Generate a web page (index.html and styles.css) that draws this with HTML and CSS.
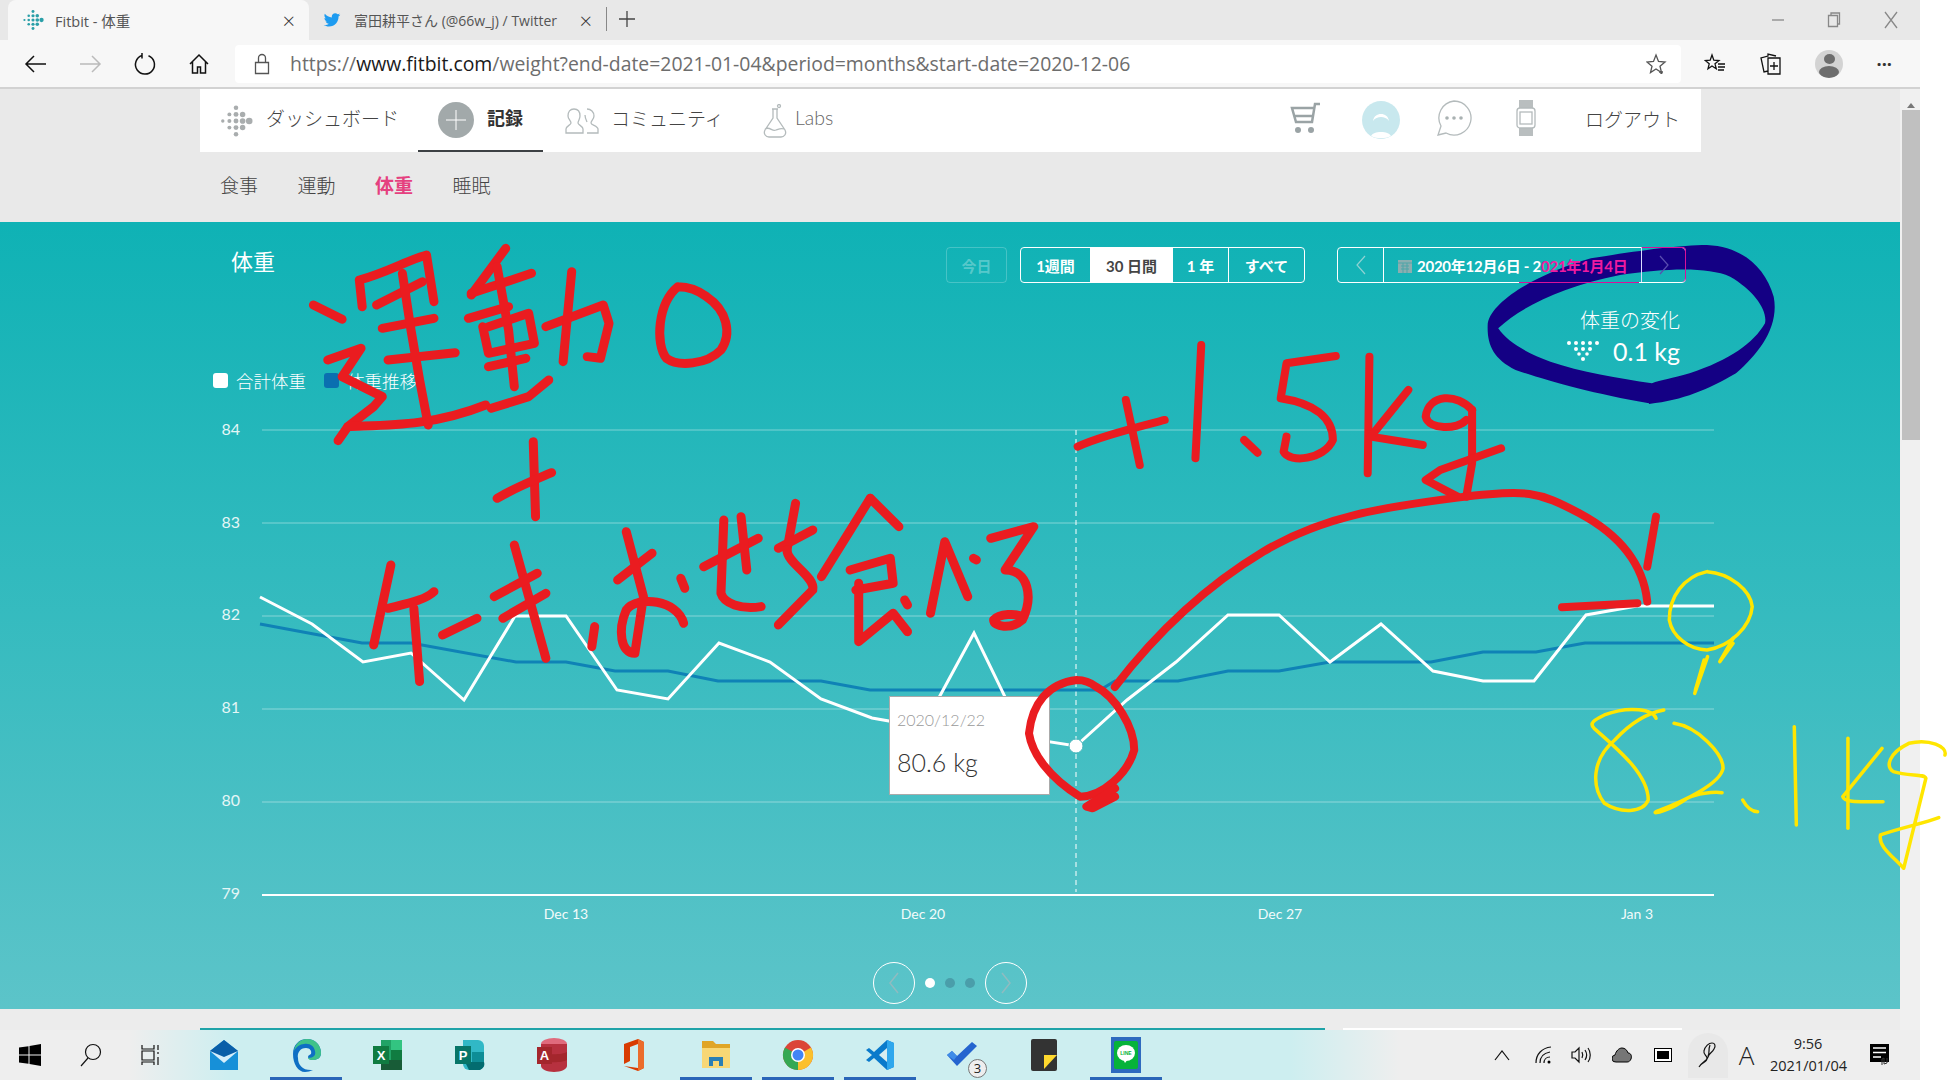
FILE: index.html
```html
<!DOCTYPE html>
<html lang="ja">
<head>
  <meta charset="UTF-8">
  <title>Fitbit - 体重</title>
  <link rel="stylesheet" href="styles.css">
</head>
<body>
  <svg class="defs" width="0" height="0">
    <symbol id="fitbit" viewBox="0 0 36 36">
      <circle cx="4" cy="18" r="1.8"/>
      <circle cx="11" cy="11" r="2.1"/><circle cx="11" cy="18" r="2.1"/><circle cx="11" cy="25" r="2.1"/>
      <circle cx="18" cy="4" r="2.4"/><circle cx="18" cy="11" r="2.6"/><circle cx="18" cy="18" r="2.6"/><circle cx="18" cy="25" r="2.6"/><circle cx="18" cy="32" r="2.4"/>
      <circle cx="25" cy="11" r="2.9"/><circle cx="25" cy="18" r="3"/><circle cx="25" cy="25" r="2.9"/>
      <circle cx="32" cy="18" r="3.5"/>
    </symbol>
  </svg>

  <div class="window">
    <div class="tabstrip">
      <div class="tab tab-active">
        <svg class="favicon fav-fitbit" width="22" height="22"><use href="#fitbit"/></svg>
        <span class="tab-title">Fitbit - 体重</span>
        <span class="tab-close">×</span>
      </div>
      <div class="tab tab-other">
        <svg class="favicon" width="18" height="18" viewBox="0 0 24 24"><path fill="#1d9bf0" d="M23 5c-.8.4-1.7.6-2.6.7.9-.6 1.7-1.4 2-2.500-.9.5-1.900.9-2.900 1.100C18.700 3.400 17.500 3 16.200 3c-2.500 0-4.500 2-4.500 4.500 0 .4 0 .7.1 1C8 8.300 4.700 6.500 2.500 3.800c-.4.7-.6 1.500-.6 2.300 0 1.600.8 2.900 2 3.700-.7 0-1.400-.2-2-.6v.1c0 2.200 1.600 4 3.600 4.400-.7.2-1.400.2-2 .1.600 1.800 2.200 3.100 4.200 3.100-2 1.500-4.300 2.200-6.700 1.900 2 1.300 4.400 2 6.900 2 8.300 0 12.800-6.900 12.800-12.800v-.6c.9-.6 1.700-1.400 2.300-2.400z"/></svg>
        <span class="tab-title">富田耕平さん (@66w_j) / Twitter</span>
        <span class="tab-close">×</span>
      </div>
      <span class="tab-sep"></span>
      <svg class="new-tab" width="20" height="20" viewBox="0 0 20 20"><path d="M10 2v16M2 10h16"/></svg>
      <div class="win-controls">
        <svg width="14" height="14" viewBox="0 0 14 14"><path d="M1 7h12"/></svg>
        <svg width="14" height="16" viewBox="0 0 14 16"><path d="M1.5 3.500h9v11h-9zM4 3.500V1h8.500v11h-2"/></svg>
        <svg width="16" height="20" viewBox="0 0 16 20"><path d="M2 2l12 16M14 2L2 18"/></svg>
      </div>
    </div>

    <div class="toolbar">
      <div class="nav-buttons">
        <svg width="24" height="24" viewBox="0 0 24 24"><path d="M22 12H2M10 4l-8 8 8 8"/></svg>
        <svg class="is-off" width="24" height="24" viewBox="0 0 24 24"><path d="M2 12h20M14 4l8 8-8 8"/></svg>
        <svg width="24" height="24" viewBox="0 0 24 24"><path d="M9 3.500A9.500 9.500 0 1 0 15.500 3.700M9 1v5.500"/></svg>
        <svg width="24" height="24" viewBox="0 0 24 24"><path d="M3 12l9-9 9 9M5.500 10v11h5v-6h3v6h5V10"/></svg>
      </div>
      <div class="address-bar">
        <svg class="lock" width="16" height="22" viewBox="0 0 16 22"><path d="M1.500 9.500h13v11h-13zM4.500 9.500V5a3.500 3.500 0 0 1 7 0v4.500"/></svg>
        <span class="url">https://<b>www.fitbit.com</b>/weight?end-date=2021-01-04&amp;period=months&amp;start-date=2020-12-06</span>
        <svg class="star-add" width="22" height="22" viewBox="0 0 22 22"><path d="M10 2l2.500 6.500 6.500.5-5 4.200 1.500 6.300-5.500-3.500-5.500 3.500 1.500-6.300-5-4.200 6.500-.5zM15 17v4M13 19h4"/></svg>
      </div>
      <div class="tool-buttons">
        <svg width="22" height="22" viewBox="0 0 22 22"><path d="M8 2l1.800 5.200 5.200.3-4 3.300 1.300 5-4.300-2.800-4 2.800 1.200-5-4-3.300 5-.3zM14 11h7M14 14h7M14 17h6"/></svg>
        <svg width="22" height="24" viewBox="0 0 22 24"><path d="M8 6h12v16H8zM8 19l-4 1-3-14 7-2V2l8 2M14 10v8M10 14h8"/></svg>
        <span class="profile"><i class="profile-head"></i><i class="profile-body"></i></span>
        <span class="more">···</span>
      </div>
    </div>

    <div class="viewport">
      <div class="page">
        <nav class="topnav">
          <a class="nav-item nav-dash">
            <svg class="nav-logo" width="34" height="34"><use href="#fitbit"/></svg>
            <span>ダッシュボード</span>
          </a>
          <a class="nav-item nav-log">
            <svg width="36" height="36" viewBox="0 0 36 36"><circle cx="18" cy="18" r="18" fill="#a2a9aa"/><path d="M18 8v20M8 18h20" stroke="#fff" fill="none"/></svg>
            <span><b>記録</b></span>
          </a>
          <a class="nav-item nav-community">
            <svg width="34" height="28" viewBox="0 0 34 28"><path class="line-icon" d="M9 2c4 0 6 3 6 7 0 3-2 5-2 7 0 2 5 3 5 6v4H1v-4c0-3 5-4 5-6 0-2-3-4-3-7 0-4 2-7 6-7zM22 2c4 0 7 3 7 7 0 3-3 5-3 7s7 3 7 6v4H22M20 8c0 3 1 5 2 7"/></svg>
            <span>コミュニティ</span>
          </a>
          <a class="nav-item nav-labs">
            <svg width="24" height="34" viewBox="0 0 24 34"><path class="line-icon" d="M9 5h6M10 5v9L2 26c-2 4 1 7 4 7h12c3 0 6-3 4-7l-8-12V5M2 25c5-3 7 3 11 1 3-1 5-2 8-1"/><circle class="line-icon" cx="16" cy="2" r="1.500"/></svg>
            <span>Labs</span>
          </a>
          <div class="nav-right">
            <svg class="ico-cart" width="32" height="32" viewBox="0 0 32 32"><path class="cart" d="M31 2h-5l-3 18H7L3 6h22M6 14h18"/><circle cx="9" cy="28" r="3" fill="#9aa3a5"/><circle cx="22" cy="28" r="3" fill="#9aa3a5"/></svg>
            <svg class="ico-avatar" width="38" height="38" viewBox="0 0 38 38"><circle cx="19" cy="19" r="19" fill="#c8e8ee"/><path d="M11 20c1-5 4-7 8-7s7 2 8 7c-2-3-5-4-8-4s-6 1-8 4zM9 35c2-3 5-4 10-4s8 1 10 4c-6 3-14 3-20 0z" fill="#fff"/></svg>
            <svg class="ico-chat" width="36" height="36" viewBox="0 0 36 36"><path class="line-icon" d="M18 1a17 17 0 1 1-8 32l-8 2 3-9A17 17 0 0 1 18 1z"/><circle cx="11" cy="18" r="1.800" fill="#a9b1b2"/><circle cx="18" cy="18" r="1.800" fill="#a9b1b2"/><circle cx="25" cy="18" r="1.800" fill="#a9b1b2"/></svg>
            <svg class="ico-watch" width="22" height="36" viewBox="0 0 22 36"><path d="M4 0h14v8H4zM4 28h14v8H4z" fill="#b9bebf"/><rect class="line-icon" x="2" y="8" width="18" height="20" rx="3"/><rect class="line-icon" x="5" y="12" width="12" height="12"/></svg>
            <a class="logout"><span>ログアウト</span></a>
          </div>
        </nav>

        <div class="subnav">
          <a>食事</a>
          <a>運動</a>
          <a class="is-current">体重</a>
          <a>睡眠</a>
        </div>

        <section class="panel">
          <div class="panel-head">
            <h2>体重</h2>
            <button class="btn-today">今日</button>
            <div class="segments">
              <button>1週間</button>
              <button class="is-on">30 日間</button>
              <button>1 年</button>
              <button>すべて</button>
            </div>
            <div class="date-range">
              <button class="date-arrow"><svg width="12" height="20" viewBox="0 0 12 20"><path d="M10 1L2 10l8 9"/></svg></button>
              <div class="date-text">
                <svg width="14" height="15" viewBox="0 0 14 15"><path d="M0 2h14v13H0z" fill="#8aaeb0"/><path d="M0 5h14M3 8h8M3 11h8M5 5v10M9 5v10" stroke="#4fa5a8"/></svg>
                <span>2020年12月6日 - 2<em>021年1月4日</em></span>
              </div>
              <button class="date-arrow date-next"><svg width="12" height="20" viewBox="0 0 12 20"><path d="M2 1l8 9-8 9"/></svg></button>
            </div>
          </div>

          <div class="change">
            <div class="change-label">体重の変化</div>
            <div class="change-value">
              <svg width="34" height="22" viewBox="0 0 34 22" fill="#fff">
                <circle cx="3" cy="3" r="2"/><circle cx="10" cy="3" r="2"/><circle cx="17" cy="3" r="2"/><circle cx="24" cy="3" r="2"/><circle cx="31" cy="3" r="2"/>
                <circle cx="10" cy="9" r="2"/><circle cx="17" cy="9" r="2"/><circle cx="24" cy="9" r="2"/>
                <circle cx="13" cy="14" r="1.800"/><circle cx="21" cy="14" r="1.800"/>
                <circle cx="17" cy="19" r="2"/>
              </svg>
              0.1 kg
            </div>
          </div>

          <div class="legend">
            <i class="swatch swatch-total"></i><span>合計体重</span>
            <i class="swatch swatch-trend"></i><span>体重推移</span>
          </div>

          <div class="chart">
            <svg class="chart-svg" width="1900" height="520" viewBox="0 410 1900 520">
              <g class="grid">
                <path d="M262 430H1714M262 523H1714M262 616H1714M262 709H1714M262 802H1714"/>
              </g>
              <path class="axis" d="M262 895H1714"/>
              <path class="cursor" d="M1076 430V892"/>
              <g class="y-labels">
                <text x="240" y="435">84</text>
                <text x="240" y="528">83</text>
                <text x="240" y="620">82</text>
                <text x="240" y="713">81</text>
                <text x="240" y="806">80</text>
                <text x="240" y="899">79</text>
              </g>
              <g class="x-labels">
                <text x="566" y="919">Dec 13</text>
                <text x="923" y="919">Dec 20</text>
                <text x="1280" y="919">Dec 27</text>
                <text x="1637" y="919">Jan 3</text>
              </g>
              <polyline class="trend" points="260,624 362,643 411,643 516,662 566,662 615,671 668,671 718,681 821,681 870,690 1100,690 1115,681 1178,681 1228,671 1279,671 1330,662 1431,662 1483,652 1536,652 1585,643 1714,643"/>
              <polyline class="total" points="260,597 312,624 363,662 411,653 464,700 515,616 566,616 617,690 668,699 719,643 770,662 821,699 872,718 923,727 974,633 1025,738 1076,746 1127,700 1176,662 1228,615 1279,615 1330,662 1381,624 1433,671 1483,681 1534,681 1586,615 1637,606 1714,606"/>
              <circle class="marker" cx="1076" cy="746" r="7"/>
            </svg>
            <div class="tooltip">
              <div class="tooltip-date">2020/12/22</div>
              <div class="tooltip-value">80.6 kg</div>
            </div>
          </div>

          <div class="pager">
            <span class="pager-btn"><svg width="12" height="24" viewBox="0 0 12 24"><path d="M10 2L2 12l8 10"/></svg></span>
            <i class="dot is-on"></i><i class="dot"></i><i class="dot"></i>
            <span class="pager-btn"><svg width="12" height="24" viewBox="0 0 12 24"><path d="M2 2l8 10-8 10"/></svg></span>
          </div>
        </section>

        <div class="page-foot">
          <i class="foot-teal"></i>
          <i class="foot-white"></i>
        </div>
      </div>

      <div class="scrollbar">
        <span class="scroll-up"></span>
        <span class="scroll-thumb"></span>
      </div>
    </div>

    <footer class="taskbar">
      <div class="sys-left">
        <svg width="22" height="22" viewBox="0 0 22 22"><path fill="#000" d="M0 3.500l9.500-1.300v8.300H0zM10.500 2L22 0v10.500H10.500zM0 11.500h9.500v8.300L0 18.500zM10.500 11.500H22V22l-11.500-2z"/></svg>
        <svg width="22" height="24" viewBox="0 0 22 24"><circle class="sys-line" cx="13" cy="9" r="7.500"/><path class="sys-line" d="M8 15L1 23"/></svg>
        <svg width="20" height="22" viewBox="0 0 20 22"><path class="sys-line" d="M1 1v4h12V1M1 7h12v9H1zM1 21v-3h12v3M17 1v5M17 8v2M17 13v8"/></svg>
      </div>
      <div class="apps">
        <span class="app"><svg width="32" height="32" viewBox="0 0 32 32"><path d="M2 12L16 1l14 11v19H2z" fill="#1790d8"/><path d="M2 12h28L16 24z" fill="#d6eefb"/><path d="M2 12L16 1l14 11-14 6z" fill="#0a5ea8"/></svg></span>
        <span class="app is-open"><svg width="32" height="34" viewBox="0 0 32 34"><path d="M3 16C3 7 9 1 17 1c8 0 14 6 14 14 0 5-4 7-8 7-3 0-5-1-5-3 0-2 2-2 3-3 1-3-1-6-5-6-6 0-9 5-8 10C8 27 13 33 23 32c-3 1-5 2-8 2C8 34 3 26 3 16z" fill="#0f6fc4"/><path d="M17 1c8 0 14 6 14 14 0 5-4 7-8 7-2 0-4 0-5-2 6 0 8-3 7-7C24 8 20 5 14 6c-4 0-8 3-10 7C5 6 10 1 17 1z" fill="#3fc28a"/></svg></span>
        <span class="app"><svg width="30" height="32" viewBox="0 0 30 32"><path d="M8 1h21v30H8z" fill="#21a366"/><path d="M18 1h11v10H18z" fill="#33c481"/><path d="M8 21h21v10H8z" fill="#185c37"/><path d="M18 11h11v10H18z" fill="#107c41"/><rect y="7" width="16" height="18" fill="#107c41"/><text class="app-letter" x="8" y="21">X</text></svg></span>
        <span class="app"><svg width="30" height="32" viewBox="0 0 30 32"><path d="M8 1h15a6 6 0 0 1 6 6v18a6 6 0 0 1-6 6H14a6 6 0 0 1-6-6z" fill="#31b8c6"/><path d="M17 13h12v10H17z" fill="#0e8d96"/><path d="M10 23h19a6 6 0 0 1-6 8H14z" fill="#036c70"/><rect y="7" width="16" height="18" fill="#077568"/><text class="app-letter" x="8" y="21">P</text></svg></span>
        <span class="app"><svg width="30" height="34" viewBox="0 0 30 34"><ellipse cx="17" cy="6" rx="13" ry="6" fill="#e06a7c"/><path d="M4 6h26v22c0 3-6 6-13 6S4 31 4 28z" fill="#b7313f"/><path d="M4 14c5 3 21 3 26 0v8c-5 3-21 3-26 0z" fill="#a4262c"/><rect y="9" width="15" height="17" fill="#a4262c"/><text class="app-letter" x="7.500" y="22">A</text></svg></span>
        <span class="app"><svg width="26" height="34" viewBox="0 0 26 34"><path d="M3 6L17 1l6 3v26l-6 3-14-5 14 2V6l-8 3v14l-6 3z" fill="#d83b01"/><path d="M17 1l6 3v26l-6 3z" fill="#eb6c2c"/></svg></span>
        <span class="app is-open"><svg width="30" height="32" viewBox="0 0 30 32"><path d="M1 2h11l3 3h14v6H1z" fill="#e0a526"/><path d="M1 9h28v20H1z" fill="#f8d775"/><path d="M8 27v-9h14v9h-4v-5h-6v5z" fill="#2a7fb5"/></svg></span>
        <span class="app is-open"><svg width="32" height="32" viewBox="0 0 32 32"><circle cx="16" cy="16" r="15" fill="#db4437"/><path d="M16 16L29 8.500A15 15 0 0 1 16 31z" fill="#fbc02d"/><path d="M16 16L16 31A15 15 0 0 1 3 8.500z" fill="#34a853"/><circle cx="16" cy="16" r="7" fill="#fff"/><circle cx="16" cy="16" r="5.500" fill="#4285f4"/></svg></span>
        <span class="app is-open"><svg width="30" height="32" viewBox="0 0 30 32"><path d="M22 1l7 3v24l-7 3L9 19l-5 4-3-2 6-5-6-5 3-2 5 4z" fill="#0a7acb"/><path d="M22 1l7 3v24l-7 3z" fill="#2fa7ed"/><path d="M22 9l-8 7 8 7z" fill="#d8edf0"/></svg></span>
        <span class="app"><svg width="32" height="30" viewBox="0 0 32 30"><path d="M1 15l5-4 5 5L26 2l5 4-20 20z" fill="#2564cf"/><path d="M1 15l5-4 5 5-3 4z" fill="#3f8ce8"/></svg><i class="app-badge">3</i></span>
        <span class="app"><svg width="26" height="32" viewBox="0 0 26 32"><rect width="26" height="32" rx="2" fill="#333"/><path d="M13 30V16h13z" fill="#ffd92e"/></svg></span>
        <span class="app is-open app-line"><svg width="30" height="36" viewBox="0 0 30 36"><rect width="30" height="36" fill="#2e6abf"/><rect x="3" y="4" width="24" height="28" rx="2" fill="#06b33a"/><ellipse cx="15" cy="16" rx="9" ry="8" fill="#fff"/><path d="M12 22h5l-3 4z" fill="#fff"/><text class="line-word" x="15" y="18">LINE</text></svg></span>
      </div>
      <div class="tray">
        <svg width="16" height="12" viewBox="0 0 16 12"><path class="sys-line" d="M1 11l7-9 7 9"/></svg>
        <svg width="18" height="18" viewBox="0 0 18 18"><path class="sys-line" d="M1 17C1 8 7 2 16 1M5 17c0-6 4-10 10-11M9 17c0-3 2-6 6-6"/><circle cx="14" cy="16" r="1.500"/></svg>
        <svg width="20" height="18" viewBox="0 0 20 18"><path class="sys-line" d="M1 6h3l4-4v14l-4-4H1zM11 6c1 2 1 4 0 6M14 4c2 3 2 7 0 10M17 2c3 4 3 10 0 14"/></svg>
        <svg width="20" height="16" viewBox="0 0 20 16"><path d="M4 15a3.500 3.500 0 0 1-1-7C4 4 7 1 10 1c3 0 5 2 6 5 3 0 4 3 3 6-1 2-2 3-4 3z" fill="#767676" stroke="#000"/></svg>
        <svg width="18" height="14" viewBox="0 0 18 14"><rect x=".5" y=".5" width="17" height="13" fill="#fff" stroke="#000"/><rect x="3" y="3" width="12" height="8" fill="#000"/></svg>
        <span class="pen-well"><svg width="20" height="26" viewBox="0 0 20 26"><path class="sys-line" d="M1 25c4-6 8-4 8-9 0-3-4-3-3-7 1-5 5-8 8-8 3 0 4 3 2 6-2 4-5 4-6 8-1 4-6 5-9 10zM12 3c-2 5 0 7-2 11"/></svg></span>
        <span class="ime">A</span>
        <div class="clock">
          <div>9:56</div>
          <div>2021/01/04</div>
        </div>
        <svg class="notify" width="22" height="24" viewBox="0 0 22 24"><path d="M1 1h19v18H1z" fill="#000"/><path d="M4 5h13M4 9.500h13M4 14h8" stroke="#fff" stroke-width="1.500"/><path d="M13 22v-6l2-1v6M15 21l3-1v-5" fill="none" stroke="#333"/></svg>
      </div>
    </footer>
  </div>

  <svg class="ink" width="1949" height="1080" viewBox="0 0 1949 1080">
    <!-- handwriting on the left, traced on a stretched crop -->
    <g class="ink-red ink-heavy" transform="translate(190 230) scale(.574 .3333)">
      <path d="M215 225 L265 268"/>
      <path d="M240 390 L298 355 L265 440 L335 500 L320 530 L275 590 L258 632"/>
      <path d="M275 590 C340 585 420 590 515 525"/>
      <path d="M300 230 L295 150 C340 130 380 90 412 75 L425 215"/>
      <path d="M325 225 L405 155"/>
      <path d="M335 295 L425 265"/>
      <path d="M345 390 L462 368"/>
      <path d="M370 130 L385 300 L400 450 L415 585"/>
      <path d="M550 55 L490 195"/>
      <path d="M490 190 L595 130"/>
      <path d="M485 265 L555 230"/>
      <path d="M535 110 L555 300 L565 470"/>
      <path d="M510 290 L520 370 L600 340 L590 250 L520 290"/>
      <path d="M520 410 L585 385"/>
      <path d="M525 535 L590 500 L625 450"/>
      <path d="M620 290 L720 225 L730 280 L715 385 L692 380"/>
      <path d="M665 125 L650 395"/>
      <path d="M850 170 C815 220 810 340 830 385 C850 410 900 405 925 360 C945 310 935 240 900 200 C885 180 865 170 850 170"/>
      <path d="M598 635 L602 860"/>
      <path d="M535 805 C570 770 600 750 630 728"/>
      <path d="M350 1005 L320 1245"/>
      <path d="M345 1135 C380 1120 410 1110 425 1085"/>
      <path d="M390 1135 L400 1355"/>
      <path d="M440 1215 L500 1165"/>
      <path d="M565 945 L620 1285"/>
      <path d="M530 1100 L605 1030"/>
      <path d="M545 1165 L620 1090"/>
      <path d="M705 1190 L700 1250"/>
      <path d="M745 1050 L805 970"/>
      <path d="M760 905 L790 1100 L775 1270 C750 1270 745 1200 760 1140 C780 1095 850 1110 860 1180"/>
      <path d="M855 1045 L862 1075"/>
      <path d="M895 1010 L990 925"/>
      <path d="M930 870 L925 1090 C930 1120 960 1140 995 1130"/>
      <path d="M960 860 L970 1020"/>
      <path d="M1055 820 L1040 960"/>
      <path d="M1025 955 L1085 900"/>
      <path d="M1040 960 C1040 1000 1090 1040 1085 1080 L1025 1185"/>
      <path d="M1185 805 L1100 1040"/>
      <path d="M1185 805 L1235 890"/>
      <path d="M1150 1020 L1220 985 L1225 1060 L1160 1080"/>
      <path d="M1165 1060 L1165 1235 L1225 1150 L1250 1205"/>
      <path d="M1245 1110 L1250 1125"/>
      <path d="M1290 1150 L1315 935 L1355 1100"/>
      <path d="M1365 985 L1370 990"/>
      <path d="M1395 925 L1470 890 L1420 1020 C1460 1020 1470 1100 1450 1170 C1430 1200 1400 1190 1400 1170 C1410 1150 1440 1150 1450 1160"/>
    </g>
    <g class="ink-red" transform="translate(1040 230) scale(.58 .3333)">
      <path d="M65 650 C100 620 170 590 215 570"/>
      <path d="M148 510 L172 705"/>
      <path d="M278 345 L268 685"/>
      <path d="M352 630 L375 668"/>
      <path d="M510 378 L425 400 L415 505 C470 520 505 560 505 630 C490 690 430 700 420 665 L425 620"/>
      <path d="M568 380 L565 730"/>
      <path d="M635 480 L570 620 L660 645"/>
      <path d="M745 540 C720 490 670 490 665 560 C670 600 720 600 735 570"/>
      <path d="M745 540 L745 700 L735 800"/>
      <path d="M795 655 L690 720 L665 750 L720 800"/>
      <path d="M129 1371 C200 1210 280 1075 385 965 S600 830 720 803 S860 785 930 850 S1040 1000 1047 1115"/>
      <path d="M1062 860 L1047 1010"/>
      <path d="M900 1132 L1030 1120"/>
    </g>
    <g class="ink-red" transform="translate(190 640) scale(.638 .3333)">
      <path d="M1390 120 C1345 130 1320 190 1315 280 C1320 340 1345 410 1395 470 C1430 470 1470 400 1480 330 C1480 260 1450 170 1420 140 C1410 125 1400 120 1390 120"/>
      <path d="M1450 445 L1405 500 L1415 505 L1450 470"/>
    </g>
    <g class="ink-yellow" transform="translate(1040 230) scale(.58 .3333)">
      <path d="M1150 1025 C1110 1040 1085 1100 1085 1170 C1090 1220 1120 1260 1150 1260 C1190 1250 1225 1190 1228 1130 C1225 1080 1190 1030 1150 1025"/>
      <path d="M1195 1225 L1172 1295 L1195 1240"/>
      <path d="M1145 1290 L1130 1380"/>
    </g>
    <g class="ink-yellow" transform="translate(1140 640) scale(.516 .3333)">
      <path d="M1100 50 L1075 160"/>
      <path d="M1000 235 C995 210 950 195 900 225 C880 240 870 250 880 265 C920 320 985 400 985 480 C975 520 930 520 900 490 C875 440 875 360 920 300 C950 250 980 220 1015 210"/>
      <path d="M1035 250 C1080 260 1130 340 1130 385 C1125 430 1060 480 1000 515 C990 525 1030 510 1060 475 C1080 460 1110 455 1128 458"/>
      <path d="M1168 480 C1175 500 1185 515 1197 515"/>
      <path d="M1268 260 L1272 555"/>
      <path d="M1372 295 L1372 565"/>
      <path d="M1438 325 L1362 470 C1365 490 1400 485 1440 485"/>
      <path d="M1560 345 C1565 320 1530 295 1490 310 C1450 340 1445 380 1460 395 C1490 410 1520 400 1523 415 L1480 685 C1460 650 1430 620 1435 585 C1470 565 1520 550 1548 533"/>
    </g>
    <path class="ink-blue" transform="translate(1040 230) scale(.58 .3333)" fill-rule="evenodd" d="M1050 520 C950 490 870 450 820 420 C780 385 770 340 772 280 C780 210 860 130 950 85 C1020 65 1100 45 1150 45 C1210 50 1250 110 1265 200 C1275 290 1240 370 1200 430 C1150 480 1110 510 1050 522 Z M790 295 C830 230 900 170 1000 135 C1080 115 1150 110 1190 140 C1230 180 1255 240 1250 280 C1230 340 1190 390 1120 430 C1090 445 1070 450 1055 460 C1000 445 930 425 880 395 C840 370 805 335 790 295 Z"/>
  </svg>
</body>
</html>
```

FILE: styles.css
```css
* {
  margin: 0;
  padding: 0;
  box-sizing: border-box;
}

html, body {
  width: 1949px;
  height: 1080px;
  overflow: hidden;
  background: #fff;
}

body {
  position: relative;
  font-family: Lato, "Noto Sans CJK JP", sans-serif;
  color: #444;
}

.defs {
  position: absolute;
}

.window {
  width: 1920px;
  height: 1080px;
  display: flex;
  flex-direction: column;
}

/* browser tabs */
.tabstrip {
  height: 40px;
  flex: none;
  background: #e8e8e8;
  display: flex;
  align-items: stretch;
  padding-left: 8px;
  font-family: "Open Sans", "Noto Sans CJK JP", sans-serif;
  color: #555;
}

.tab {
  display: flex;
  align-items: center;
  padding: 0 14px;
  gap: 5px;
}

.tab-active {
  width: 301px;
  background: #f7f7f7;
  border-radius: 8px 8px 0 0;
  padding-left: 14px;
  gap: 11px;
  font-size: 14.5px;
}

.tab-other {
  width: 297px;
  font-size: 14px;
}

.favicon {
  flex: none;
}

.fav-fitbit {
  fill: #2a9fa8;
}

.tab-title {
  flex: 1;
  white-space: nowrap;
}

.tab-other .tab-title {
  padding-left: 8px;
}

.tab-close {
  font-size: 22px;
  line-height: 1;
  color: #333;
  font-weight: 300;
}

.tab-sep {
  width: 1px;
  height: 24px;
  margin-top: 7px;
  background: #888;
}

.new-tab {
  margin: 9px 0 0 10px;
}

.new-tab path, .win-controls path, .nav-buttons path, .tool-buttons path, .lock, .star-add {
  fill: none;
  stroke: #444;
  stroke-width: 1.3;
}

.win-controls {
  margin-left: auto;
  width: 149px;
  padding-right: 21px;
  display: flex;
  align-items: center;
  justify-content: space-between;
}

.win-controls svg path {
  stroke: #888;
}

/* address bar row */
.toolbar {
  height: 49px;
  flex: none;
  background: #f7f7f7;
  border-bottom: 2px solid #d2d2d2;
  display: flex;
  align-items: center;
  font-family: "Open Sans", "Noto Sans CJK JP", sans-serif;
}

.nav-buttons {
  width: 235px;
  padding: 0 24px;
  display: flex;
  align-items: center;
  justify-content: space-between;
}

.nav-buttons svg path {
  stroke: #111;
  stroke-width: 1.5;
}

.nav-buttons .is-off path {
  stroke: #bbb;
}

.address-bar {
  width: 1446px;
  height: 38px;
  background: #fff;
  border-radius: 4px;
  display: flex;
  align-items: center;
  padding: 0 13px 0 19px;
}

.lock {
  stroke: #555;
}

.url {
  margin-left: 20px;
  font-size: 19.4px;
  color: #6d6d6d;
  white-space: nowrap;
}

.url b {
  font-weight: 400;
  color: #1a1a1a;
}

.star-add {
  margin-left: auto;
  stroke: #555;
}

.tool-buttons {
  flex: 1;
  padding: 0 28px 0 23px;
  display: flex;
  align-items: center;
  justify-content: space-between;
}

.tool-buttons svg path {
  stroke: #111;
}

.profile {
  width: 28px;
  height: 28px;
  border-radius: 50%;
  background: #d3d3d3;
  overflow: hidden;
  display: flex;
  flex-direction: column;
  align-items: center;
}

.profile-head {
  width: 11px;
  height: 12px;
  margin-top: 4px;
  border-radius: 50%;
  background: #6d6d6d;
}

.profile-body {
  width: 20px;
  height: 14px;
  margin-top: 2px;
  border-radius: 50%;
  background: #6d6d6d;
}

.more {
  font-size: 18px;
  line-height: 1;
  font-weight: 700;
  color: #333;
}

/* page area */
.viewport {
  height: 941px;
  flex: none;
  display: flex;
  background: #f0f0f0;
}

.page {
  width: 1900px;
  flex: none;
  background: #e9e9e9;
}

.topnav {
  width: 1501px;
  height: 63px;
  margin-left: 200px;
  background: #fff;
  display: flex;
  align-items: center;
  font-size: 19px;
  font-weight: 300;
  color: #444;
}

.topnav span {
  margin-bottom: 6px;
}

.nav-item {
  height: 100%;
  display: flex;
  align-items: center;
}

.nav-dash {
  padding-left: 19px;
  gap: 13px;
  width: 218px;
}

.nav-logo {
  fill: #a9adae;
}

.nav-log {
  width: 125px;
  padding-left: 20px;
  gap: 13px;
  border-bottom: 2px solid #3d4144;
  font-size: 18px;
}

.nav-log b {
  color: #333;
  font-weight: 700;
}

.nav-community {
  margin-left: 22px;
  gap: 12px;
}

.nav-labs {
  margin-left: 39px;
  gap: 8px;
  font-size: 19.5px;
  color: #666;
}

.line-icon {
  fill: none;
  stroke: #b4bbbc;
  stroke-width: 1.3;
}

.cart {
  fill: none;
  stroke: #9aa3a5;
  stroke-width: 2.5;
}

.nav-right {
  margin-left: auto;
  padding: 0 21px 5px 0;
  display: flex;
  align-items: center;
}

.ico-avatar {
  margin: 3px 0 0 41px;
}

.ico-chat {
  margin-left: 36px;
}

.ico-watch {
  margin-left: 43px;
}

.logout {
  margin-left: 48px;
}

.logout span {
  margin-bottom: 0;
}

.subnav {
  height: 70px;
  padding: 0 0 6px 220px;
  display: flex;
  align-items: center;
  gap: 39.5px;
  font-size: 19px;
  font-weight: 300;
  color: #444;
}

.subnav .is-current {
  color: #e5407f;
  font-weight: 700;
}

/* weight panel */
.panel {
  height: 787px;
  padding-top: 25px;
  background: linear-gradient(#0fb2b5, #5cc4c9);
  color: #fff;
}

.panel-head {
  height: 36px;
  padding: 0 214px 0 231px;
  display: flex;
  align-items: stretch;
}

.panel-head h2 {
  font-size: 22px;
  font-weight: 400;
  line-height: 30px;
  margin-right: auto;
}

.panel-head button {
  background: none;
  border: 0;
  color: #fff;
  font-family: inherit;
  font-size: 15px;
  font-weight: 700;
}

.panel-head .btn-today {
  width: 61px;
  border: 1px solid rgba(255, 255, 255, .22);
  border-radius: 4px;
  color: rgba(255, 255, 255, .3);
}

.segments {
  margin-left: 13px;
  display: flex;
  border: 1px solid #fff;
  border-radius: 4px;
  overflow: hidden;
}

.segments button {
  width: 70px;
  border-right: 1px solid #fff;
}

.segments button:nth-child(2) {
  width: 82px;
}

.segments button:nth-child(3) {
  width: 56px;
}

.segments button:last-child {
  width: 75px;
  border-right: 0;
}

.segments .is-on {
  background: #fff;
  color: #444;
}

.date-range {
  position: relative;
  z-index: 2;
  width: 349px;
  margin-left: 32px;
  display: flex;
  border: 1px solid #fff;
  border-radius: 4px;
}

.date-range::after {
  content: "";
  position: absolute;
  right: 46px;
  bottom: -1px;
  width: 120px;
  height: 1px;
  background: #d9109a;
}

.panel-head .date-arrow {
  width: 45px;
  flex: none;
  display: flex;
  align-items: center;
  justify-content: center;
}

.date-arrow path {
  fill: none;
  stroke: #8fd2d3;
  stroke-width: 1.2;
}

.panel-head .date-next {
  border-left: 1px solid #ddf;
  border-top: 1px solid #d9109a;
  border-right: 1px solid #d9109a;
  margin: -1px -1px 0 auto;
  border-radius: 0 4px 4px 0;
}

.date-next path {
  stroke: #5a4db0;
}

.date-text {
  flex: 1;
  border-left: 1px solid #fff;
  display: flex;
  align-items: center;
  gap: 5px;
  padding-left: 14px;
  font-size: 15px;
  font-weight: 700;
  letter-spacing: -.25px;
  white-space: nowrap;
}

.date-text em {
  font-style: normal;
  color: #f01aa0;
}

.change {
  height: 62px;
  margin-top: 25px;
  padding-right: 220px;
  text-align: right;
}

.change-label {
  font-size: 20px;
  font-weight: 300;
  line-height: 24px;
}

.change-value {
  display: flex;
  justify-content: flex-end;
  align-items: center;
  gap: 13px;
  font-size: 25px;
  line-height: 38px;
}

.legend {
  height: 15px;
  margin-top: 3px;
  padding-left: 213px;
  display: flex;
  align-items: center;
  font-size: 17.5px;
  font-weight: 300;
}

.swatch {
  width: 15px;
  height: 15px;
  border-radius: 3px;
  margin-right: 8px;
}

.swatch-total {
  background: #fff;
}

.swatch-trend {
  margin-left: 18px;
  background: #0a6fb0;
}

.chart {
  position: relative;
  height: 520px;
  margin-top: 22px;
}

.chart-svg {
  display: block;
}

.grid path {
  fill: none;
  stroke: rgba(255, 255, 255, .2);
  stroke-width: 2;
}

.axis {
  fill: none;
  stroke: #fff;
  stroke-width: 2;
}

.cursor {
  fill: none;
  stroke: #fff;
  stroke-width: 1;
  stroke-dasharray: 5 4;
}

.y-labels text {
  fill: #e4f6f6;
  font-size: 16px;
  text-anchor: end;
}

.x-labels text {
  fill: #f2fbfb;
  font-size: 14px;
  text-anchor: middle;
}

.trend, .total {
  fill: none;
  stroke-width: 3;
}

.trend {
  stroke: #0f82b6;
}

.total {
  stroke: #fff;
}

.marker {
  fill: #fff;
  stroke: #49b7bd;
  stroke-width: 1;
}

.tooltip {
  position: absolute;
  left: 889px;
  top: 286px;
  width: 161px;
  height: 99px;
  padding: 12px 7px;
  background: #fff;
  border: 1px solid #aaa;
}

.tooltip-date {
  font-size: 16px;
  font-weight: 300;
  line-height: 22px;
  color: #999;
}

.tooltip-value {
  margin-top: 17px;
  font-size: 25px;
  font-weight: 300;
  line-height: 28px;
  color: #333;
}

.pager {
  margin-top: 32px;
  padding-left: 873px;
  display: flex;
  align-items: center;
}

.pager-btn {
  width: 42px;
  height: 42px;
  border: 1px solid #fff;
  border-radius: 50%;
  display: flex;
  align-items: center;
  justify-content: center;
}

.pager-btn path {
  fill: none;
  stroke: #8fbcc0;
  stroke-width: 1.5;
}

.dot {
  width: 10px;
  height: 10px;
  border-radius: 50%;
  background: #4a9eaa;
  margin-left: 10px;
}

.dot.is-on {
  background: #fff;
  margin-left: 10px;
}

.pager-btn:last-child {
  margin-left: 10px;
}

.page-foot {
  height: 21px;
  padding-top: 19px;
  display: flex;
  background: #ececec;
}

.foot-teal {
  width: 1125px;
  height: 2px;
  margin-left: 200px;
  background: #1fa3a8;
}

.foot-white {
  width: 339px;
  height: 2px;
  margin-left: 18px;
  background: #fff;
}

.scrollbar {
  width: 18px;
  margin-left: 2px;
  background: #f0f0f0;
  display: flex;
  flex-direction: column;
  align-items: center;
}

.scroll-up {
  margin-top: 14px;
  border: 4px solid transparent;
  border-top: 0;
  border-bottom: 5px solid #777;
}

.scroll-thumb {
  width: 100%;
  height: 330px;
  margin-top: 2px;
  background: #c0c0c0;
}

/* windows taskbar */
.taskbar {
  height: 50px;
  flex: none;
  display: flex;
  align-items: center;
  background: linear-gradient(to right, #eeeeee 130px, #cdeef0 230px, #cdeef0 1290px, #eeeeee 1400px);
  font-family: "Open Sans", sans-serif;
}

.sys-left {
  width: 180px;
  padding: 0 19px;
  display: flex;
  align-items: center;
  justify-content: space-between;
}

.sys-line {
  fill: none;
  stroke: #111;
  stroke-width: 1.2;
}

.apps {
  display: flex;
  height: 100%;
}

.app {
  position: relative;
  width: 82px;
  display: flex;
  align-items: center;
  justify-content: center;
  padding-bottom: 1px;
}

.apps .app:first-child {
  margin-left: 3px;
}

.app.is-open::after {
  content: "";
  position: absolute;
  left: 5px;
  right: 5px;
  bottom: 0;
  height: 3px;
  background: #2a65b8;
}

.app-letter {
  fill: #fff;
  font-family: "Liberation Sans", sans-serif;
  font-size: 13px;
  font-weight: 700;
  text-anchor: middle;
}

.line-word {
  fill: #06b33a;
  font-family: "Liberation Sans", sans-serif;
  font-size: 5px;
  font-weight: 700;
  text-anchor: middle;
}

.app-badge {
  position: absolute;
  right: 16px;
  bottom: 2px;
  width: 19px;
  height: 19px;
  border: 1px solid #777;
  border-radius: 50%;
  background: #eee;
  color: #222;
  font-style: normal;
  font-size: 13px;
  line-height: 17px;
  text-align: center;
}

.tray {
  margin-left: auto;
  padding-right: 29px;
  display: flex;
  align-items: center;
}

.tray > svg:nth-child(2) {
  margin-left: 25px;
}

.tray > svg:nth-child(3) {
  margin-left: 18px;
}

.tray > svg:nth-child(4) {
  margin-left: 21px;
}

.tray > svg:nth-child(5) {
  margin-left: 22px;
}

.pen-well {
  width: 40px;
  height: 45px;
  margin-left: 16px;
  align-self: flex-end;
  border-radius: 20px 20px 0 0;
  background: #e8e8e8;
  display: flex;
  align-items: center;
  justify-content: center;
}

.ime {
  width: 19px;
  margin-left: 9px;
  text-align: center;
  font-size: 26px;
  line-height: 1;
  font-weight: 300;
  color: #222;
}

.clock {
  width: 76px;
  margin-left: 14px;
  font-size: 14.5px;
  line-height: 22px;
  text-align: center;
  white-space: nowrap;
  color: #222;
}

.notify {
  margin-left: 23px;
}

/* marker pen over the screenshot */
.ink {
  position: absolute;
  left: 0;
  top: 0;
  z-index: 1;
  pointer-events: none;
}

.ink path {
  vector-effect: non-scaling-stroke;
}

.ink-red path {
  fill: none;
  stroke: #ea1c20;
  stroke-width: 8;
  stroke-linecap: round;
  stroke-linejoin: round;
}

.ink-heavy path {
  stroke-width: 9;
}

.ink-yellow path {
  fill: none;
  stroke: #ffe600;
  stroke-width: 3.5;
  stroke-linecap: round;
  stroke-linejoin: round;
}

.ink-blue {
  fill: #140084;
}
```
